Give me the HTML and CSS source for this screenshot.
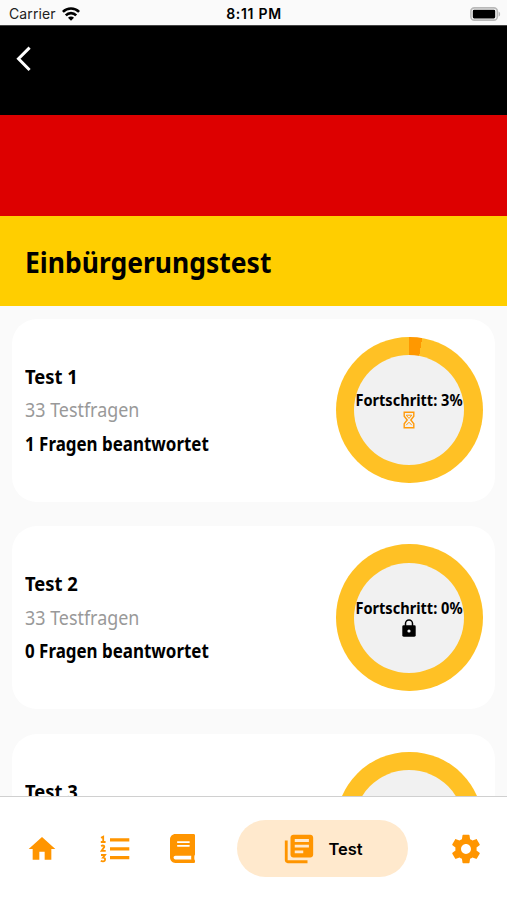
FILE: index.html
```html
<!DOCTYPE html>
<html lang="de">
<head>
    <meta charset="UTF-8">
    <meta name="viewport" content="width=device-width, initial-scale=1.0">
    <title>Einbürgerungstest</title>
    <link rel="stylesheet" href="styles.css">
</head>
<body>
    <div class="app">
        <div class="status-bar">
            <div class="carrier">
                <span>Carrier</span>
                <svg width="18" height="14" viewBox="0 0 18 14" fill="none" stroke="#000" stroke-width="2.6">
                    <path d="M0.9 4.9a11.5 11.5 0 0 1 16.2 0"/>
                    <path d="M3.8 8.3a7.2 7.2 0 0 1 10.4 0"/>
                    <path d="M9 13.8L6 10.8a4.1 4.1 0 0 1 6 0z" fill="#000" stroke="none"/>
                </svg>
            </div>
            <div class="clock">8:11 PM</div>
            <div class="battery">
                <svg width="31" height="14" viewBox="0 0 31 14">
                    <rect x="0.9" y="0.9" width="26.4" height="12.2" rx="3.4" fill="#fafafa" stroke="#b9b9b9" stroke-width="1.6"/>
                    <rect x="2.8" y="2.7" width="22.4" height="8.8" rx="1.4" fill="#000"/>
                    <path d="M28.6 4.4c2 .7 2 4.5 0 5.2z" fill="#b9b9b9"/>
                </svg>
            </div>
        </div>

        <div class="flag-black">
            <svg width="16" height="26" viewBox="0 0 16 26" fill="none" stroke="#fff" stroke-width="3">
                <path d="M13.6 1.6L2.5 12.8L13.6 24"/>
            </svg>
        </div>
        <div class="flag-red"></div>
        <div class="flag-gold">
            <h1>Einbürgerungstest</h1>
        </div>

        <div class="test-list">
            <div class="card">
                <div class="card-text">
                    <div class="title">Test 1</div>
                    <div class="count">33 Testfragen</div>
                    <div class="answered">1 Fragen beantwortet</div>
                </div>
                <div class="progress started">
                    <div class="progress-inner">
                        <span class="label">Fortschritt: 3%</span>
                        <svg width="12" height="18" viewBox="0 0 12 18" fill="none" stroke="#ff9a0a" stroke-width="1.4">
                            <path d="M1.2 1.2h9.6v4L7.8 9l3 3.8v4H1.2v-4L4.2 9l-3-3.8z"/>
                            <path d="M3.2 4.2h5.6L6 7.4zM3.2 14.2L6 11.2l2.8 3" stroke-width="1"/>
                        </svg>
                    </div>
                </div>
            </div>

            <div class="card">
                <div class="card-text">
                    <div class="title">Test 2</div>
                    <div class="count">33 Testfragen</div>
                    <div class="answered">0 Fragen beantwortet</div>
                </div>
                <div class="progress">
                    <div class="progress-inner">
                        <span class="label">Fortschritt: 0%</span>
                        <svg width="14" height="18" viewBox="0 0 14 18">
                            <path d="M3.5 7.5V4.5a3.5 3.5 0 0 1 7 0V7.5" fill="none" stroke="#000" stroke-width="1.5"/>
                            <rect x="0.3" y="6.3" width="13.4" height="11.4" rx="1.4"/>
                            <circle cx="7" cy="12" r="1.6" fill="#f1f1f1"/>
                        </svg>
                    </div>
                </div>
            </div>

            <div class="card">
                <div class="card-text">
                    <div class="title">Test 3</div>
                </div>
                <div class="progress">
                    <div class="progress-inner"></div>
                </div>
            </div>
        </div>

        <div class="tab-bar">
            <div class="tab home">
                <svg width="32" height="32" viewBox="0 0 24 24">
                    <path d="M10 20v-6h4v6h5v-8h3L12 3 2 12h3v8z"/>
                </svg>
            </div>
            <div class="tab numbers">
                <svg width="30" height="28" viewBox="0 0 30 28">
                    <path d="M10 3.3h19.3v3.2H10zM10 12.2h19.3v3.2H10zM10 21h19.3v3.2H10z"/>
                    <path d="M1 2.7L3.2 1.7V7M0.8 7h4.8M1.2 11.2c1.5-1.3 3.5-.6 3 .9L1.5 15.900h4.200M1 20h4L3 22.600c3 0 2.600 3.900-.2 3.700-.8 0-1.400-.2-2-.6" fill="none" stroke="#ff9500" stroke-width="1.8"/>
                </svg>
            </div>
            <div class="tab book">
                <svg width="25" height="29" viewBox="0 0 448 512" preserveAspectRatio="none">
                    <path d="M448 360V24c0-13.3-10.7-24-24-24H96C43 0 0 43 0 96v320c0 53 43 96 96 96h328c13.3 0 24-10.7 24-24v-16c0-7.5-3.5-14.3-8.9-18.7-4.2-15.4-4.2-59.3 0-74.7 5.4-4.3 8.9-11.1 8.9-18.6zM128 134c0-3.3 2.7-6 6-6h212c3.3 0 6 2.7 6 6v20c0 3.3-2.7 6-6 6H134c-3.3 0-6-2.7-6-6v-20zm0 64c0-3.3 2.7-6 6-6h212c3.3 0 6 2.7 6 6v20c0 3.3-2.7 6-6 6H134c-3.3 0-6-2.7-6-6v-20zm253.4 250H96c-17.7 0-32-14.3-32-32 0-17.6 14.4-32 32-32h285.4c-1.9 17.1-1.9 46.9 0 64z"/>
                </svg>
            </div>
            <div class="tab-active">
                <svg width="34" height="34" viewBox="0 0 24 24">
                    <path d="M4 6H2v14c0 1.100.9 2 2 2h14v-2H4z"/>
                    <path d="M20 2H8c-1.1 0-2 .9-2 2v12c0 1.1.9 2 2 2h12c1.1 0 2-.9 2-2V4c0-1.1-.9-2-2-2zm-1 9H9V9h10v2zm-4 4H9v-2h6v2zm4-8H9V5h10v2z"/>
                </svg>
                <span>Test</span>
            </div>
            <div class="tab settings">
                <svg width="34" height="34" viewBox="0 0 24 24">
                    <path d="M19.43 12.98c.04-.32.07-.64.07-.98s-.03-.66-.07-.98l2.11-1.65c.19-.15.24-.42.12-.64l-2-3.46c-.12-.22-.39-.3-.61-.22l-2.49 1c-.52-.4-1.08-.73-1.69-.98l-.38-2.65C14.46 2.18 14.25 2 14 2h-4c-.25 0-.46.18-.49.42l-.38 2.65c-.61.25-1.17.59-1.69.98l-2.49-1c-.23-.09-.49 0-.61.22l-2 3.46c-.13.22-.07.49.12.64l2.11 1.65c-.04.32-.07.65-.07.98s.03.66.07.98l-2.11 1.65c-.19.15-.24.42-.12.64l2 3.46c.12.22.39.3.61.22l2.49-1c.52.4 1.08.73 1.69.98l.38 2.65c.03.24.24.42.49.42h4c.25 0 .46-.18.49-.42l.38-2.65c.61-.25 1.17-.59 1.69-.98l2.49 1c.23.09.49 0 .61-.22l2-3.46c.12-.22.07-.49-.12-.64l-2.11-1.65zM12 15.5c-1.93 0-3.5-1.57-3.5-3.5s1.57-3.5 3.5-3.5 3.5 1.57 3.5 3.5-1.57 3.5-3.5 3.5z"/>
                </svg>
            </div>
        </div>
    </div>
</body>
</html>
```
FILE: styles.css
```css
body {
    margin: 0;
    font-family: "Noto Sans", sans-serif;
    background-color: #fafafa;
    color: #000;
}

svg {
    display: block;
    flex-shrink: 0;
}

h1 {
    margin: 0;
    padding-top: 1px;
    font-size: 29px;
    line-height: 36px;
    font-weight: 700;
    transform: scaleX(0.913);
    transform-origin: left;
}

.app {
    height: 900px;
    display: flex;
    flex-direction: column;
    overflow: hidden;
}

/* iOS status bar */
.status-bar {
    height: 26px;
    flex-shrink: 0;
    display: grid;
    grid-template-columns: 1fr auto 1fr;
    align-items: center;
    padding: 2px 6px 0 9px;
    box-sizing: border-box;
    font-family: Inter, sans-serif;
    font-size: 14px;
    line-height: 20px;
    border-bottom: 1px solid #444;
}

.carrier {
    display: flex;
    align-items: center;
    gap: 6px;
    color: #222;
    letter-spacing: 0.1px;
}

.clock {
    font-weight: 600;
    letter-spacing: 0.7px;
    margin-right: 2px;
}

.battery {
    justify-self: end;
}

/* flag header */
.flag-black {
    height: 89px;
    flex-shrink: 0;
    padding: 20px 0 0 16px;
    box-sizing: border-box;
    background-color: #000;
}

.flag-red {
    height: 101px;
    flex-shrink: 0;
    background-color: #dd0000;
}

.flag-gold {
    height: 90px;
    flex-shrink: 0;
    display: flex;
    align-items: center;
    padding: 0 25px;
    box-sizing: border-box;
    background-color: #ffce00;
}

/* list of tests */
.test-list {
    flex: 1;
    min-height: 0;
    overflow: hidden;
    display: flex;
    flex-direction: column;
    gap: 24.6px;
    padding: 12.5px 12px 0;
}

.card {
    height: 183px;
    flex-shrink: 0;
    display: flex;
    align-items: center;
    justify-content: space-between;
    padding: 0 12.5px 0 13px;
    box-sizing: border-box;
    border-radius: 25px;
    background-color: #fff;
}

.card-text {
    height: 101px;
    font-size: 20px;
    line-height: 33.5px;
    font-weight: 700;
    white-space: nowrap;
}

.title,
.count,
.answered {
    transform: scaleX(0.92);
    transform-origin: left;
}

.count {
    font-weight: 400;
    color: #999;
    transform: scaleX(0.895);
}

.answered {
    transform: scaleX(0.847);
}

.progress {
    width: 146.5px;
    height: 146.5px;
    flex-shrink: 0;
    display: flex;
    align-items: center;
    justify-content: center;
    border-radius: 50%;
    background-color: #ffc125;
}

.started {
    background: conic-gradient(#ff9800 2.8%, #ffc125 0);
}

.progress-inner {
    width: 110px;
    height: 110px;
    display: flex;
    flex-direction: column;
    align-items: center;
    justify-content: center;
    border-radius: 50%;
    background-color: #f1f1f1;
}

.label {
    padding-bottom: 2px;
    font-size: 15.5px;
    line-height: 18px;
    font-weight: 700;
    white-space: nowrap;
    transform: scaleX(0.94);
}

/* bottom navigation */
.tab-bar {
    height: 104px;
    flex-shrink: 0;
    display: flex;
    align-items: center;
    box-sizing: border-box;
    border-top: 1px solid #d0d0d0;
    background-color: #fff;
    fill: #ff9500;
}

.home {
    margin-left: 26px;
}

.numbers {
    margin-left: 42px;
}

.book {
    margin-left: 40px;
}

.tab-active {
    width: 171px;
    height: 57px;
    margin-left: 42px;
    display: flex;
    align-items: center;
    justify-content: center;
    gap: 12px;
    border-radius: 29px;
    background-color: #ffe9cd;
    font-family: Inter, sans-serif;
    font-size: 16.5px;
    font-weight: 600;
}

.settings {
    margin-left: 41px;
}
```
